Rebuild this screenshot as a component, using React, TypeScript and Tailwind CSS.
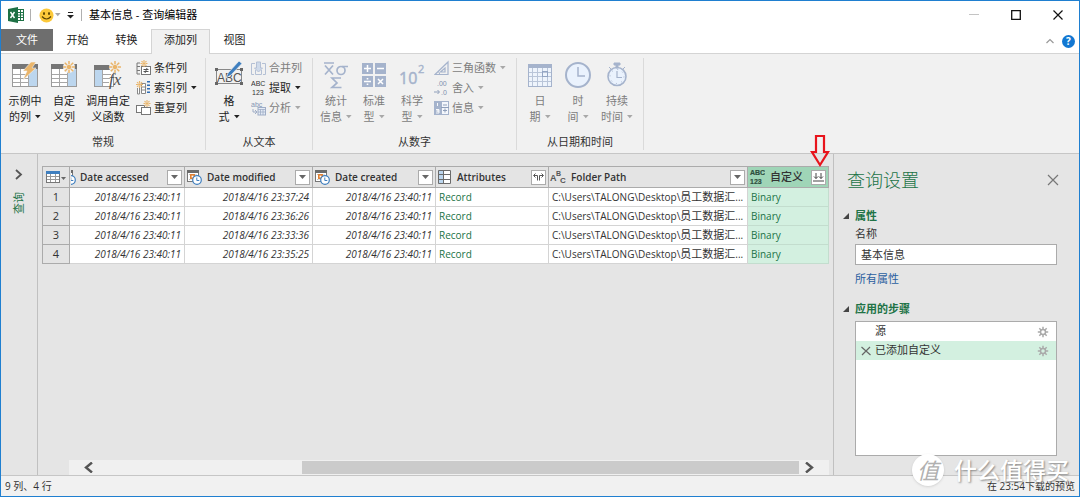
import type { ReactNode } from "react";

type IconProps = { children: ReactNode; w: number; h: number; className?: string };

function Svg({ children, w, h, className = "" }: IconProps) {
  return (
    <svg width={w} height={h} viewBox={`0 0 ${w} ${h}`} fill="none" aria-hidden="true" className={`shrink-0 ${className}`}>
      {children}
    </svg>
  );
}

function Spark({ x, y, r = 5 }: { x: number; y: number; r?: number }) {
  const rays = [0, 45, 90, 135, 180, 225, 270, 315];
  return (
    <g transform={`translate(${x} ${y})`} stroke="#eab56a" strokeWidth={r > 4 ? 1.5 : 1.1}>
      {rays.map((a) => (
        <path key={a} d={`M0 ${-r * 0.45}V${-r}`} transform={`rotate(${a})`} />
      ))}
      <circle r={r * 0.38} stroke="none" fill="#eab56a" />
    </g>
  );
}

function Caret({ muted = false }: { muted?: boolean }) {
  return (
    <svg width="6" height="4" viewBox="0 0 6 4" aria-hidden="true" className="inline-block shrink-0">
      <path d="M0 0h5.6L2.8 3.2z" fill={muted ? "#a8a8a8" : "#222"} />
    </svg>
  );
}

function SheetIcon({ kind }: { kind: "bolt" | "spark" }) {
  return (
    <Svg w={30} h={28}>
      <rect x="2.5" y="3.5" width="25" height="22" fill="#fff" stroke="#9a9a9a" />
      <rect x="19" y="8" width="8" height="17" fill="#bcd6ee" />
      <rect x="2" y="3" width="26" height="5" fill="#767676" />
      <path d="M3 13.5h16M3 17.5h16M3 21.5h16M10.5 8v17M18.5 8v17" stroke="#a6a6a6" />
      {kind === "bolt" ? (
        <path d="M21 1h5l-4 6h4L13 19l4-9h-4z" fill="#eab56a" stroke="#f1f1f1" strokeWidth=".6" />
      ) : (
        <>
          <circle cx="20" cy="6" r="6" fill="#f1f1f1" />
          <Spark x={20} y={6} r={6} />
        </>
      )}
    </Svg>
  );
}

function FunctionIcon() {
  return (
    <Svg w={30} h={28}>
      <rect x="1.5" y="4.5" width="19" height="21" fill="#fff" stroke="#9a9a9a" />
      <rect x="2" y="9" width="7" height="16" fill="#bcd6ee" />
      <rect x="1" y="4" width="20" height="5" fill="#767676" />
      <path d="M9 13.5h9M9 17.5h8M9 21.5h7M9.5 9v16" stroke="#a6a6a6" />
      <circle cx="22" cy="6" r="6" fill="#f1f1f1" />
      <Spark x={22} y={6} r={6} />
      <text x="16" y="24" fontFamily="Liberation Serif" fontStyle="italic" fontSize="17" fill="#505050">fx</text>
    </Svg>
  );
}

function FormatIcon() {
  return (
    <Svg w={30} h={28}>
      <rect x="2.5" y="8.5" width="25" height="14" stroke="#888" />
      <text x="3" y="21" fontFamily="Liberation Sans" fontSize="12" fill="#555">ABC</text>
      <path d="M1 7h3v3H1zM26 7h3v3h-3zM1 21h3v3H1zM26 21h3v3h-3z" fill="#666" />
      <path d="M12 17l2-5L25 0l3 2.500L17 14z" fill="#3f7fbf" stroke="#f1f1f1" strokeWidth=".7" />
    </Svg>
  );
}

function StatsIcon() {
  return (
    <Svg w={28} h={28}>
      <g stroke="#a5b3cc" strokeWidth="1.7">
        <path d="M2 2h10M3 4.500l8 9M11 4.500l-8 9M26 5.500h-6" />
        <circle cx="19" cy="9.500" r="4" />
        <path d="M19 17h-9l5 5-5 4.500h9.500" />
      </g>
    </Svg>
  );
}

function StandardIcon() {
  return (
    <Svg w={28} h={28}>
      <path d="M2 2h11v11H2zM15 2h11v11H15zM2 15h11v11H2zM15 15h11v11H15z" fill="#a5b3cc" />
      <path d="M7.500 4v7M4 7.500h7M17 7.500h7M4 20.500h7M18 18l5 5M23 18l-5 5" stroke="#fff" strokeWidth="1.5" />
      <path d="M6.700 17h1.600v1.600H6.700zM6.700 22.400h1.600V24H6.700z" fill="#fff" />
    </Svg>
  );
}

function ScienceIcon() {
  return (
    <Svg w={28} h={28}>
      <text x="1" y="23" fontFamily="Open Sans" fontSize="16" fill="#a5b3cc" stroke="#a5b3cc" strokeWidth=".5">10</text>
      <text x="20" y="12" fontFamily="Open Sans" fontSize="11" fill="#a5b3cc" stroke="#a5b3cc" strokeWidth=".4">2</text>
    </Svg>
  );
}

function CalendarIcon() {
  return (
    <Svg w={28} h={28}>
      <rect x="2.5" y="3.5" width="23" height="22" fill="#eef4fc" stroke="#a5b3cc" />
      <rect x="2" y="3" width="24" height="4" fill="#a5b3cc" />
      <path d="M6.500 7v18M11.500 7v18M16.500 7v18M21.500 7v18M3 11.500h22M3 15.500h22M3 20.500h22" stroke="#b9c5d9" />
      <rect x="16.5" y="10.5" width="5" height="5" stroke="#93a5c3" />
    </Svg>
  );
}

function ClockIcon() {
  return (
    <Svg w={28} h={28}>
      <circle cx="14" cy="14" r="12" fill="#eaf2fd" stroke="#a5b3cc" strokeWidth="2" />
      <path d="M14 6v9h7" stroke="#a5b3cc" strokeWidth="1.5" />
    </Svg>
  );
}

function StopwatchIcon() {
  return (
    <Svg w={28} h={28}>
      <circle cx="14" cy="15.5" r="9" fill="#eaf2fd" stroke="#a5b3cc" strokeWidth="1.6" />
      <path d="M11 2h6v2h-2v3h-2V4h-2zM6 6l2 2M22 6l-2 2" fill="#a5b3cc" stroke="#a5b3cc" />
      <path d="M14 10v6.500h5" stroke="#a5b3cc" strokeWidth="1.2" />
      <circle cx="14" cy="15.5" r="7" stroke="#a5b3cc" strokeDasharray="1 4.5" />
    </Svg>
  );
}

function ConditionIcon() {
  return (
    <Svg w={15} h={16}>
      <path d="M4 3H1v11h3M1 6.500h3M1 10.500h3" stroke="#777" />
      <rect x="5.5" y="6.5" width="9" height="8" fill="#fff" stroke="#777" />
      <path d="M7.500 9.500h5M7.500 11.500h5M11 8l-2 5" stroke="#555" />
      <Spark x={8} y={3.5} r={3.5} />
    </Svg>
  );
}

function IndexIcon() {
  return (
    <Svg w={15} h={16}>
      <path d="M1.500 8v6h2V8M5.500 3.500h4v10h-4z" stroke="#888" fill="#fff" />
      <path d="M6 7h3M6 10h3" stroke="#888" />
      <path d="M12.500 1v14" stroke="#2f6db5" strokeWidth="3" strokeDasharray="1.5 2" />
      <Spark x={3.5} y={4.5} r={3.5} />
    </Svg>
  );
}

function DuplicateIcon() {
  return (
    <Svg w={15} h={16}>
      <rect x=".5" y="5.5" width="8" height="7" fill="#fff" stroke="#777" />
      <rect x="5.5" y="7.5" width="9" height="7" fill="#fff" stroke="#777" />
      <Spark x={11} y={3.5} r={3.5} />
    </Svg>
  );
}

function MergeIcon() {
  return (
    <Svg w={15} h={16}>
      <path d="M4 3.500H.5v11H3M11 3.500h3.500v11H12M4.500 10v4.500h6V10" stroke="#b4c0d5" />
      <path d="M5.500 2h4v6h2l-4 4-4-4h2z" fill="#cfdaea" stroke="#b4c0d5" />
    </Svg>
  );
}

function ExtractIcon() {
  return (
    <Svg w={15} h={16}>
      <text x="0" y="6.4" fontFamily="Liberation Sans" fontSize="7" fill="#333">ABC</text>
      <text x="1" y="14.6" fontFamily="Liberation Sans" fontSize="7" fill="#333">123</text>
    </Svg>
  );
}

function ParseIcon() {
  return (
    <Svg w={15} h={16}>
      <text x="0" y="7" fontFamily="Liberation Sans" fontSize="7" fill="#8496b5">abc</text>
      <path d="M2 9v3h4M4 10l2 2-2 2" stroke="#9fadc6" />
      <rect x="7" y="7.5" width="7.5" height="7.5" fill="#e4ebf6" stroke="#9fadc6" />
      <path d="M7 9.500h8M7 12h8M9.500 9v6M12 9v6" stroke="#9fadc6" strokeWidth=".8" />
    </Svg>
  );
}

function TrigIcon() {
  return (
    <Svg w={15} h={16}>
      <path d="M1 14.500L14 2v12.500zM6.500 12L11 8v4z" stroke="#a5b3cc" strokeWidth="1.2" />
      <path d="M4 11.500q2 1 1.500 3" stroke="#a5b3cc" />
    </Svg>
  );
}

function RoundIcon() {
  return (
    <Svg w={15} h={16}>
      <text x="3" y="6.4" fontFamily="Liberation Sans" fontSize="7" fill="#7f90ae">.00</text>
      <text x="7" y="14.6" fontFamily="Liberation Sans" fontSize="7" fill="#7f90ae">.0</text>
      <path d="M0 12h5M3.500 10l2 2-2 2" stroke="#8f9fba" />
    </Svg>
  );
}

function InfoIcon() {
  return (
    <Svg w={15} h={16}>
      <rect x=".5" y="1.5" width="6" height="13" fill="#a5b3cc" stroke="#a5b3cc" />
      <rect x="7.5" y="1.5" width="7" height="13" fill="#f4f7fc" stroke="#a5b3cc" />
      <path d="M9 5h4M9 10.500h4M11 8.500v4M7 7.500h8" stroke="#8f9fba" />
      <path d="M3.500 3v3M2 9.500h3v1.500H2.500 5V13H2" stroke="#fff" strokeWidth=".9" />
    </Svg>
  );
}

type BigProps = { icon: ReactNode; lines: [string, string]; width: string; arrow?: boolean; muted?: boolean };

function BigButton({ icon, lines, width, arrow = true, muted = false }: BigProps) {
  return (
    <button type="button" className={`flex flex-col items-center pt-[3px] ${width} ${muted ? "text-[#7d7d7d]" : "text-[#222]"}`}>
      {icon}
      <span className="mt-1 leading-4">{lines[0]}</span>
      <span className="flex items-center gap-1 leading-4">
        {lines[1]}
        {arrow && <Caret muted={muted} />}
      </span>
    </button>
  );
}

type SmallProps = { icon: ReactNode; label: string; arrow?: boolean; muted?: boolean };

function SmallButton({ icon, label, arrow = false, muted = false }: SmallProps) {
  return (
    <button type="button" className={`flex h-5 items-center ${muted ? "text-[#7d7d7d]" : "text-[#222]"}`}>
      {icon}
      <span className="mr-1 ml-[3px]">{label}</span>
      {arrow && <Caret muted={muted} />}
    </button>
  );
}

function RibbonGroup({ title, width, children }: { title: string; width: string; children: ReactNode }) {
  return (
    <section className={`mt-1 mb-[3px] flex shrink-0 flex-col border-r border-[#dadada] ${width}`}>
      <div className="flex flex-1 items-start px-1">{children}</div>
      <h2 className="text-center leading-4 text-[#333]">{title}</h2>
    </section>
  );
}

function Ribbon() {
  return (
    <div className="flex h-[100px] border-b border-[#c6c6c6] bg-[#f1f1f1]">
      <RibbonGroup title="常规" width="w-[205px]">
        <BigButton icon={<SheetIcon kind="bolt" />} lines={["示例中", "的列"]} width="w-10" />
        <BigButton icon={<SheetIcon kind="spark" />} lines={["自定", "义列"]} width="w-[38px]" arrow={false} />
        <BigButton icon={<FunctionIcon />} lines={["调用自定", "义函数"]} width="w-[50px]" arrow={false} />
        <div className="ml-[3px]">
          <SmallButton icon={<ConditionIcon />} label="条件列" />
          <SmallButton icon={<IndexIcon />} label="索引列" arrow />
          <SmallButton icon={<DuplicateIcon />} label="重复列" />
        </div>
      </RibbonGroup>
      <RibbonGroup title="从文本" width="w-[107px]">
        <BigButton icon={<FormatIcon />} lines={["格", "式"]} width="w-[38px]" />
        <div className="ml-[3px]">
          <SmallButton icon={<MergeIcon />} label="合并列" muted />
          <SmallButton icon={<ExtractIcon />} label="提取" arrow />
          <SmallButton icon={<ParseIcon />} label="分析" arrow muted />
        </div>
      </RibbonGroup>
      <RibbonGroup title="从数字" width="w-[204px]">
        <BigButton icon={<StatsIcon />} lines={["统计", "信息"]} width="w-[38px]" muted />
        <BigButton icon={<StandardIcon />} lines={["标准", "型"]} width="w-[38px]" muted />
        <BigButton icon={<ScienceIcon />} lines={["科学", "型"]} width="w-[38px]" muted />
        <div className="ml-[3px]">
          <SmallButton icon={<TrigIcon />} label="三角函数" arrow muted />
          <SmallButton icon={<RoundIcon />} label="舍入" arrow muted />
          <SmallButton icon={<InfoIcon />} label="信息" arrow muted />
        </div>
      </RibbonGroup>
      <RibbonGroup title="从日期和时间" width="w-[127px]">
        <BigButton icon={<CalendarIcon />} lines={["日", "期"]} width="w-[38px]" muted />
        <BigButton icon={<ClockIcon />} lines={["时", "间"]} width="w-[38px]" muted />
        <BigButton icon={<StopwatchIcon />} lines={["持续", "时间"]} width="w-10" muted />
      </RibbonGroup>
    </div>
  );
}

function TitleBar() {
  return (
    <header className="flex h-7 items-center pr-2 pl-[7px] text-black">
      <Svg w={16} h={16}>
        <rect x="9" y="2.5" width="6.5" height="11" fill="#fff" stroke="#1e7145" />
        <path d="M9 5.500h6M9 8h6M9 10.500h6M12.500 3v10" stroke="#1e7145" />
        <path d="M0 2l10-2v16L0 14z" fill="#1e7145" />
        <path d="M2.500 5l4 6M6.500 5l-4 6" stroke="#fff" strokeWidth="1.4" />
      </Svg>
      <span className="mr-2 ml-1.5 h-3 w-px bg-[#b0b0b0]" />
      <Svg w={15} h={15}>
        <circle cx="7.5" cy="7.5" r="7" fill="#fcc93a" />
        <ellipse cx="5" cy="5.5" rx="1" ry="1.5" fill="#5a4300" />
        <ellipse cx="10" cy="5.5" rx="1" ry="1.5" fill="#5a4300" />
        <path d="M3 8.500q4.500 5 9 0" stroke="#5a4300" strokeWidth="1.2" />
      </Svg>
      <span className="ml-px flex"><Caret muted /></span>
      <Svg w={7} h={7} className="ml-1.5">
        <path d="M1 .5h5" stroke="#222" />
        <path d="M0 3h7L3.500 6.500z" fill="#222" />
      </Svg>
      <span className="mx-[7px] h-3 w-px bg-[#b0b0b0]" />
      <h1 className="flex-1">基本信息 - 查询编辑器</h1>
      <div className="flex items-center gap-8">
        <button type="button" aria-label="最小化"><Svg w={10} h={10}><path d="M0 4.500h10" stroke="#c4c4c4" /></Svg></button>
        <button type="button" aria-label="最大化"><Svg w={10} h={10}><path d="M.7.700h8.600v8.600H.7z" stroke="#111" strokeWidth="1.3" /></Svg></button>
        <button type="button" aria-label="关闭" className="mr-2"><Svg w={10} h={10}><path d="M.5.500l9 9M9.500.500l-9 9" stroke="#111" strokeWidth="1.2" /></Svg></button>
      </div>
    </header>
  );
}

function TabBar() {
  return (
    <nav className="flex h-[25px] items-start border-b border-[#d4d4d4] leading-[22px] text-[#222]">
      <button type="button" className="w-[52px] bg-[#6e6e6e] text-white">文件</button>
      <button type="button" className="w-[49px]">开始</button>
      <button type="button" className="w-[49px]">转换</button>
      <button type="button" className="-mb-px h-[25px] w-[59px] border border-b-0 border-[#d4d4d4] bg-[#f1f1f1] pb-1 leading-5">添加列</button>
      <button type="button" className="w-[49px]">视图</button>
      <div className="ml-auto flex items-center gap-2 self-center pr-1">
        <button type="button" aria-label="折叠功能区"><Svg w={8} h={6}><path d="M.5 5L4 1.500 7.500 5" stroke="#999" strokeWidth="1.2" /></Svg></button>
        <button type="button" aria-label="帮助" className="grid h-[13px] w-[13px] place-items-center rounded-full bg-[#1277d2] text-[10px] leading-none font-bold text-white">?</button>
      </div>
    </nav>
  );
}

function DateTypeIcon() {
  return (
    <Svg w={16} h={16}>
      <rect x="1.5" y="1.5" width="11" height="11" fill="#fff" stroke="#777" />
      <path d="M1 1h12v3H1z" fill="#6b6b6b" />
      <path d="M3 5.500h8M3 10.500h5" stroke="#bbb" strokeDasharray="1.5 1" />
      <rect x="4.8" y="5.8" width="3.4" height="3.4" fill="#fff" stroke="#e07b28" strokeWidth="1.5" />
      <circle cx="11" cy="11" r="4.3" fill="#fff" stroke="#3f7fbf" strokeWidth="1.2" />
      <path d="M10.800 8.500v3h2.500" stroke="#3f7fbf" />
    </Svg>
  );
}

function RecordTypeIcon() {
  return (
    <Svg w={15} h={16}>
      <rect x="1" y="1" width="5" height="14" fill="#bcd6ee" />
      <rect x="6" y="1" width="8" height="14" fill="#fff" />
      <path d="M1.500 1.500h12v13h-12zM6.500 1v14M1 5.500h13M1 10.500h13" stroke="#6b6b6b" />
    </Svg>
  );
}

function TextTypeIcon() {
  return (
    <Svg w={16} h={16}>
      <g fontFamily="Liberation Sans" fontWeight="bold" fill="#555">
        <text x="0" y="12" fontSize="9">A</text>
        <text x="6" y="7" fontSize="7">B</text>
        <text x="10" y="14" fontSize="8">C</text>
      </g>
    </Svg>
  );
}

function AnyTypeIcon() {
  return (
    <Svg w={16} h={16}>
      <g fontFamily="Liberation Sans" fill="#2f4f3f" fontSize="7" stroke="#2f4f3f" strokeWidth=".2">
        <text x="1" y="6.4">ABC</text>
        <text x="1" y="14.6">123</text>
      </g>
    </Svg>
  );
}

function FilterGlyph() {
  return <Svg w={7} h={4}><path d="M0 0h7L3.500 4z" fill="#666" /></Svg>;
}

function ExpandGlyph() {
  return (
    <Svg w={11} h={8}>
      <path d="M4.500 7.500V2.500H1M2.500.5l-2 2 2 2M6.500 7.500V2.500H10M8.500.5l2 2-2 2" stroke="#555" />
    </Svg>
  );
}

function CombineGlyph() {
  return (
    <Svg w={11} h={9}>
      <path d="M3 0v5.500M1 3.500l2 2 2-2M8 0v5.500M6 3.500l2 2 2-2M0 8h11" stroke="#444" />
    </Svg>
  );
}

type Column = { title: string; icon: ReactNode; glyph: ReactNode; action: string; head: string; label: string };

const columns: Column[] = [
  { title: "Date accessed", icon: <span className="flex w-[5px] justify-end overflow-hidden"><DateTypeIcon /></span>, glyph: <FilterGlyph />, action: "筛选", head: "bg-[#e4e4e4]", label: "pl-1" },
  { title: "Date modified", icon: <DateTypeIcon />, glyph: <FilterGlyph />, action: "筛选", head: "bg-[#e4e4e4]", label: "pl-[5px]" },
  { title: "Date created", icon: <DateTypeIcon />, glyph: <FilterGlyph />, action: "筛选", head: "bg-[#e4e4e4]", label: "pl-[5px]" },
  { title: "Attributes", icon: <RecordTypeIcon />, glyph: <ExpandGlyph />, action: "展开", head: "bg-[#e4e4e4]", label: "pl-[5px]" },
  { title: "Folder Path", icon: <TextTypeIcon />, glyph: <FilterGlyph />, action: "筛选", head: "bg-[#e4e4e4]", label: "pl-[5px]" },
  { title: "自定义", icon: <AnyTypeIcon />, glyph: <CombineGlyph />, action: "合并文件", head: "bg-[#9fd5b7]", label: "pl-[5px] text-[11px] font-medium" }
];

const rows = [
  { accessed: "2018/4/16 23:40:11", modified: "2018/4/16 23:37:24", created: "2018/4/16 23:40:11" },
  { accessed: "2018/4/16 23:40:11", modified: "2018/4/16 23:36:26", created: "2018/4/16 23:40:11" },
  { accessed: "2018/4/16 23:40:11", modified: "2018/4/16 23:33:36", created: "2018/4/16 23:40:11" },
  { accessed: "2018/4/16 23:40:11", modified: "2018/4/16 23:35:25", created: "2018/4/16 23:40:11" }
];

function DataTable() {
  const dateCell = "border-r border-b border-[#d4d4d4] bg-white pr-[3px] text-right italic";
  const textCell = "truncate border-r border-b border-[#d4d4d4] bg-white pl-[3px]";
  return (
    <table className="w-[787px] table-fixed border-separate border-spacing-0 border-t border-l border-[#ababab] text-[10px] leading-[18px] text-[#333]">
      <colgroup>
        <col className="w-[27px]" />
        <col className="w-[115px]" />
        <col className="w-32" />
        <col className="w-[123px]" />
        <col className="w-[113px]" />
        <col className="w-[199px]" />
        <col />
      </colgroup>
      <thead>
        <tr>
          <th className="h-[21px] border-r border-b border-[#ababab] bg-[#e4e4e4] p-0">
            <button type="button" aria-label="表格选项" className="flex w-full items-center justify-center gap-px">
              <Svg w={14} h={12}>
                <rect x=".5" y=".5" width="13" height="11" fill="#fff" stroke="#777" />
                <path d="M0 0h14v3H0z" fill="#3f7fbf" />
                <path d="M1 5.500h12M1 8.500h12M4.500 3v8M9.500 3v8" stroke="#999" />
              </Svg>
              <Svg w={5} h={4} className="mt-1"><path d="M0 0h5L2.500 3z" fill="#666" /></Svg>
            </button>
          </th>
          {columns.map((col) => (
            <th key={col.title} className={`h-[21px] border-r border-b border-[#ababab] p-0 font-semibold ${col.head}`}>
              <div className="flex items-center pr-[2px] pl-px">
                {col.icon}
                <span className={`flex-1 truncate text-left ${col.label}`}>{col.title}</span>
                <button type="button" aria-label={`${col.action} ${col.title}`} className="grid h-[15px] w-[15px] shrink-0 place-items-center border border-[#ababab] bg-white">
                  {col.glyph}
                </button>
              </div>
            </th>
          ))}
        </tr>
      </thead>
      <tbody>
        {rows.map((row, index) => (
          <tr key={index}>
            <th className="border-r border-b border-[#ababab] bg-[#e4e4e4] p-0 text-[11px] font-normal">{index + 1}</th>
            <td className={dateCell}>{row.accessed}</td>
            <td className={dateCell}>{row.modified}</td>
            <td className={dateCell}>{row.created}</td>
            <td className={`${textCell} text-[#217346]`}>Record</td>
            <td className={textCell}>C:\Users\TALONG\Desktop\<span className="text-[11px]">员工数据汇</span>...</td>
            <td className="border-r border-b border-[#c3ddce] bg-[#d3f0e0] pl-[3px] text-[#217346]">Binary</td>
          </tr>
        ))}
      </tbody>
    </table>
  );
}

function SectionTitle({ children }: { children: ReactNode }) {
  return (
    <h3 className="flex items-center gap-1.5 leading-4 font-bold text-[#217346]">
      <Svg w={6} h={6}><path d="M6 0v6H0z" fill="#444" /></Svg>
      {children}
    </h3>
  );
}

function Gear() {
  return (
    <Svg w={12} h={12}>
      <g stroke="#aaa" strokeWidth="1.5">
        <circle cx="6" cy="6" r="2.5" />
        {[0, 45, 90, 135, 180, 225, 270, 315].map((a) => (
          <path key={a} d="M6 3.500V.8" transform={`rotate(${a} 6 6)`} />
        ))}
      </g>
    </Svg>
  );
}

function SettingsPanel() {
  return (
    <aside className="w-[246px] shrink-0 border-l border-[#c0c0c0] pr-[22px] pl-[9px]">
      <div className="flex items-center justify-between pt-3 pl-1">
        <h2 className="text-[18px] leading-7 font-light text-[#217346]">查询设置</h2>
        <button type="button" aria-label="关闭查询设置" className="-mr-0.5"><Svg w={12} h={12}><path d="M1 1l10 10M11 1L1 11" stroke="#777" strokeWidth="1.2" /></Svg></button>
      </div>
      <div className="mt-3.5">
        <SectionTitle>属性</SectionTitle>
      </div>
      <div className="mt-0.5 ml-3">
        <label htmlFor="query-name" className="block leading-4">名称</label>
        <input id="query-name" defaultValue="基本信息" className="mt-0.5 block h-[21px] w-full border border-[#ababab] bg-white px-[5px] pb-0.5" />
        <a href="#properties" className="mt-1.5 block leading-4 text-[#2b60a0]">所有属性</a>
      </div>
      <div className="mt-3.5">
        <SectionTitle>应用的步骤</SectionTitle>
      </div>
      <ul className="mt-1 ml-3 h-[135px] border border-[#ababab] bg-white">
        <li className="flex h-[19px] items-center pr-[7px] pl-[19px]"><span className="flex-1">源</span><Gear /></li>
        <li className="flex h-[19px] items-center bg-[#d3f0e0] pr-[7px] pl-[5px]">
          <button type="button" aria-label="删除步骤" className="mr-1"><Svg w={10} h={10}><path d="M.5 1l9 8M9 1L1 9" stroke="#666" strokeWidth="1.2" /></Svg></button>
          <span className="flex-1">已添加自定义</span>
          <Gear />
        </li>
      </ul>
    </aside>
  );
}

function Scrollbar() {
  return (
    <div className="mr-1 ml-[31px] flex h-[15px] items-center bg-[#f0f0f0]">
      <button type="button" aria-label="向左滚动" className="ml-[15px]"><Svg w={9} h={11}><path d="M8 .5L2 5.500l6 5" stroke="#555" strokeWidth="2.4" /></Svg></button>
      <div className="flex flex-1 self-stretch pr-1.5 pl-[209px]">
        <div className="my-px flex-1 bg-[#cbcbcb]" />
      </div>
      <button type="button" aria-label="向右滚动" className="mr-[15px]"><Svg w={9} h={11}><path d="M1 .5l6 5-6 5" stroke="#555" strokeWidth="2.4" /></Svg></button>
    </div>
  );
}

export default function App() {
  return (
    <div className="relative flex min-h-screen flex-col overflow-hidden border border-[#1f7fd0] bg-white font-['Open_Sans','Noto_Sans_CJK_SC',sans-serif] text-[11px] text-[#333]">
      <TitleBar />
      <TabBar />
      <Ribbon />
      <main className="flex flex-1 bg-[#e5e5e5]">
        <div className="flex w-[37px] shrink-0 flex-col items-center border-r border-[#c0c0c0] pt-[15px]">
          <button type="button" aria-label="展开查询" className="flex flex-col items-center gap-3">
            <Svg w={8} h={11}><path d="M1 1l5 4.500L1 10" stroke="#555" strokeWidth="1.8" /></Svg>
            <span className="rotate-180 leading-4 text-[#217346] [text-orientation:sideways] [writing-mode:vertical-rl]">查询</span>
          </button>
        </div>
        <div className="flex min-w-0 flex-1 flex-col">
          <div className="relative mt-3 ml-1 min-h-0 flex-1">
            <DataTable />
            <svg width="20" height="34" viewBox="0 0 20 34" fill="none" aria-hidden="true" className="absolute -top-8 left-[768px]">
              <path d="M6 2h8v16h4l-8 13-8-13h4z" stroke="#e8141c" strokeWidth="2.2" />
            </svg>
          </div>
          <Scrollbar />
        </div>
        <SettingsPanel />
      </main>
      <footer className="flex h-[21px] items-center justify-between border-t border-[#c6c6c6] bg-[#f1f1f1] px-1 text-[10px]">
        <span>9 列、4 行</span>
        <span>在 23:54下载的预览</span>
      </footer>
      <div className="pointer-events-none absolute right-2.5 bottom-2.5 flex items-center gap-2.5 text-white">
        <span className="grid h-8 w-8 place-items-center rounded-full bg-white text-[22px] leading-8 text-[#b0b0b0] italic shadow">值</span>
        <span className="text-[23px] leading-8 font-medium [text-shadow:1px_1px_2px_#888]">什么值得买</span>
      </div>
    </div>
  );
}
